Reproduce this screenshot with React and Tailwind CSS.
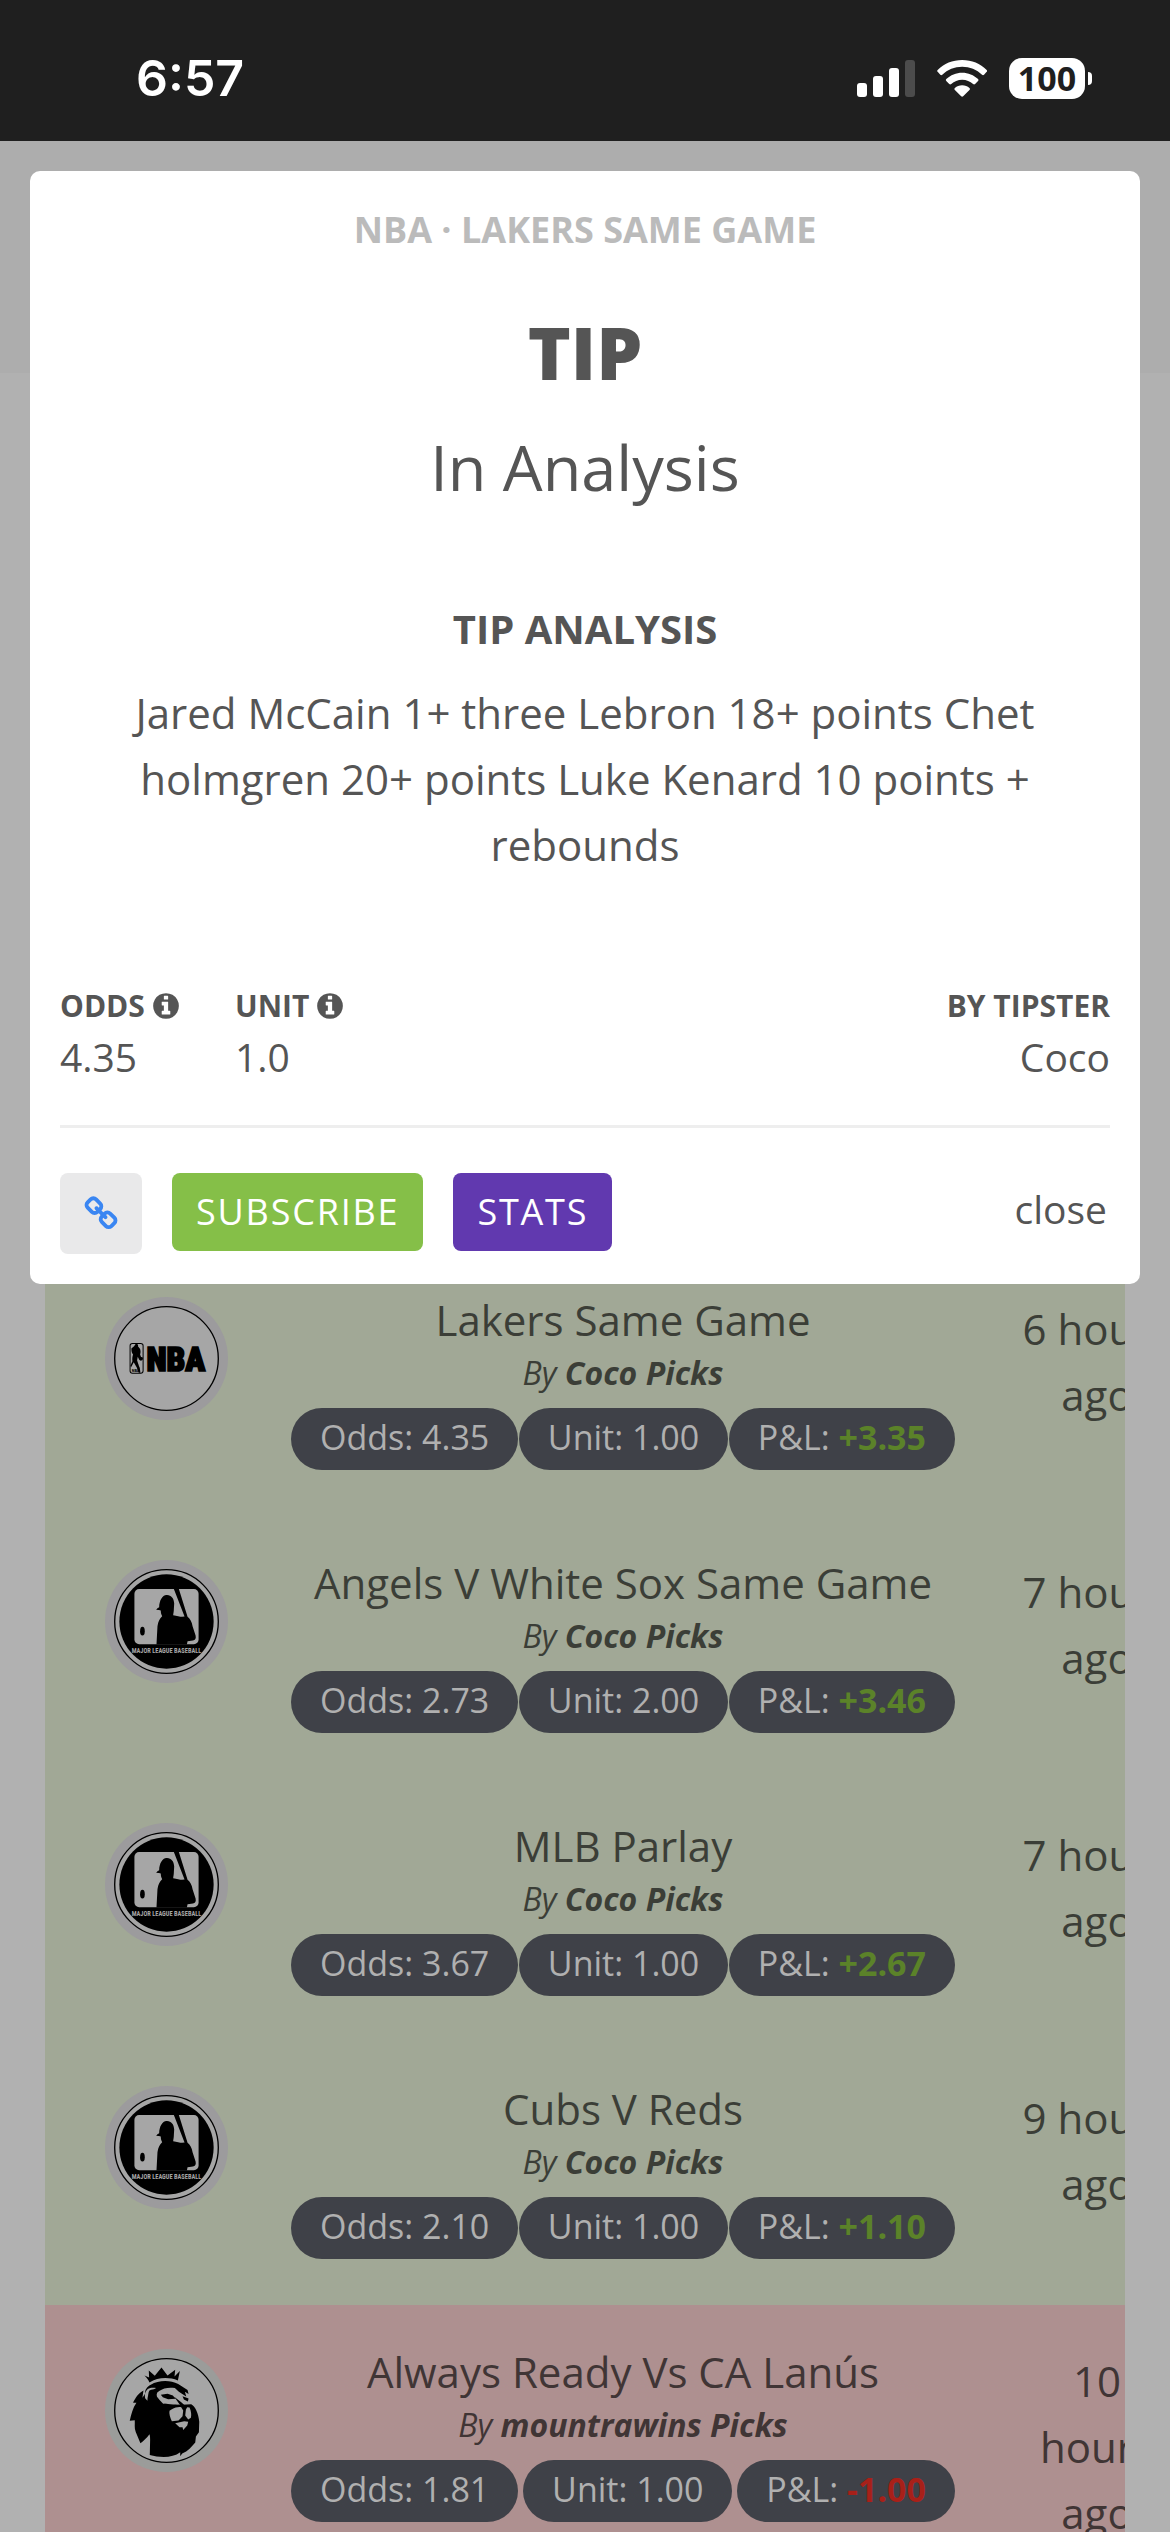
import React, { useState } from "react";

const tips = [
    { title: "Lakers Same Game", tipster: "Coco Picks", odds: "4.35", unit: "1.00", pl: "+3.35", time: "6 hours ago", logo: "nba" },
    { title: "Angels V White Sox Same Game", tipster: "Coco Picks", odds: "2.73", unit: "2.00", pl: "+3.46", time: "7 hours ago", logo: "mlb" },
    { title: "MLB Parlay", tipster: "Coco Picks", odds: "3.67", unit: "1.00", pl: "+2.67", time: "7 hours ago", logo: "mlb" },
    { title: "Cubs V Reds", tipster: "Coco Picks", odds: "2.10", unit: "1.00", pl: "+1.10", time: "9 hours ago", logo: "mlb" },
    { title: "Always Ready Vs CA Lanús", tipster: "mountrawins Picks", odds: "1.81", unit: "1.00", pl: "-1.00", time: "10 hours ago", logo: "lion" },
];

function StatusBar() {
    return (
        <div className="flex h-[141px] items-end justify-between bg-[#1f1f1f] pr-[78px] pb-9 pl-[136px] text-white">
            <span className="font-['Inter'] text-[50px] leading-[54px] font-semibold">6:57</span>
            <div className="flex h-[54px] items-center gap-[22px]">
                <svg className="h-[37px] w-[58px]" viewBox="0 0 58 37" fill="#fff">
                    <rect x="0" y="23" width="10" height="14" rx="3" />
                    <rect x="16" y="16" width="10" height="21" rx="3" />
                    <rect x="32" y="8" width="10" height="29" rx="3" />
                    <rect x="48" y="0" width="10" height="37" rx="3" fill="#4c4c4c" />
                </svg>
                <svg className="h-[37px] w-[50px]" viewBox="348 87 151 111" fill="#fff">
                    <path d="M424 87c29 0 55 11 74 30q3 3 0 5l-8 9q-3 3-6 0c-16-15-37-24-60-24s-44 9-60 24q-3 3-6 0l-8-9q-3-2 0-5c19-19 45-30 74-30z" />
                    <path d="M424 125c18 0 35 7 48 19q3 3 0 6l-9 9q-3 3-6 0c-9-8-20-13-33-13s-24 5-33 13q-3 3-6 0l-9-9q-3-3 0-6c13-12 30-19 48-19z" />
                    <path d="M424 163c9 0 16 3 22 8q3 3 0 6l-19 19q-3 3-6 0l-19-19q-3-3 0-6c6-5 13-8 22-8z" />
                </svg>
                <div className="flex items-center gap-[3px]">
                    <span className="flex h-[41px] w-[76px] items-center justify-center rounded-[13px] bg-white text-[34px] leading-[41px] font-bold text-[#1f1f1f]">
                        100
                    </span>
                    <span className="h-[13px] w-1 rounded-r-full bg-white"></span>
                </div>
            </div>
        </div>
    );
}

function InfoIcon() {
    return (
        <svg className="size-[30px]" viewBox="0 0 1792 1792" fill="currentColor">
            <path d="M1152 1376v-160q0-14-9-23t-23-9h-96v-512q0-14-9-23t-23-9h-320q-14 0-23 9t-9 23v160q0 14 9 23t23 9h96v320h-96q-14 0-23 9t-9 23v160q0 14 9 23t23 9h448q14 0 23-9t9-23zm-128-896v-160q0-14-9-23t-23-9h-192q-14 0-23 9t-9 23v160q0 14 9 23t23 9h192q14 0 23-9t9-23zm640 416q0 209-103 385.5t-279.5 279.5-385.5 103-385.5-103-279.5-279.5-103-385.5 103-385.5 279.5-279.5 385.5-103 385.5 103 279.5 279.5 103 385.5z" />
        </svg>
    );
}

function LinkIcon() {
    return (
        <svg className="size-9" viewBox="0 0 1792 1792" fill="#3a86f2">
            <path d="M1520 1216q0-40-28-68l-208-208q-28-28-68-28-42 0-72 32 3 3 19 18.5t21.5 21.5 15 19 13 25.5 3.5 27.5q0 40-28 68t-68 28q-15 0-27.5-3.5t-25.5-13-19-15-21.5-21.5-18.5-19q-33 31-33 73 0 40 28 68l206 207q27 27 68 27 40 0 68-26l147-146q28-28 28-67zm-703-705q0-40-28-68l-206-207q-28-28-68-28-39 0-68 27l-147 146q-28 28-28 67 0 40 28 68l208 208q27 27 68 27 42 0 72-31-3-3-19-18.5t-21.5-21.5-15-19-13-25.5-3.5-27.5q0-40 28-68t68-28q15 0 27.5 3.5t25.5 13 19 15 21.5 21.5 18.5 19q33-31 33-73zm895 705q0 120-85 203l-147 146q-83 83-203 83-121 0-204-85l-206-207q-83-83-83-203 0-123 88-209l-88-88q-86 88-208 88-120 0-204-84l-208-208q-84-84-84-204t85-203l147-146q83-83 203-83 121 0 204 85l206 207q83 83 83 203 0 123-88 209l88 88q86-88 208-88 120 0 204 84l208 208q84 84 84 204z" />
        </svg>
    );
}

function NbaLogo() {
    return (
        <svg className="size-[123px]" viewBox="46 51 368 368">
            <circle cx="230" cy="235" r="184" fill="#9c9b9d" />
            <circle cx="230" cy="235" r="155" fill="#a6a6a6" stroke="#000" strokeWidth="4" />
            <rect x="121" y="190" width="39" height="89" rx="7" fill="#a6a6a6" stroke="#000" strokeWidth="3" />
            <path d="M138 191c5-1 8 3 7 8l5 6c3 5 3 12 1 18l3 8c4-2 7 2 5 7-3 5-9 4-11 0l-4-8-2 10c3 9 5 16 8 23l2 15h-5l-6-16-9-16-8 15-2-4 6-14c-1-8 0-14 2-20-4-5-5-10-5-18l8-7z" />
            <text x="126" y="274" fontSize="13" fontWeight="700" fontFamily="Roboto Condensed, Liberation Sans, sans-serif">NBA</text>
            <text x="170" y="273" fontSize="99" fontWeight="900" stroke="#000" strokeWidth="5" fontFamily="Roboto Condensed, Open Sans Condensed, Liberation Sans Narrow, sans-serif">NBA</text>
        </svg>
    );
}

function MlbLogo() {
    return (
        <svg className="size-[123px]" viewBox="46 60 368 368">
            <circle cx="230" cy="244" r="184" fill="#9c9b9d" />
            <circle cx="230" cy="244" r="155" fill="#a6a6a6" stroke="#000" strokeWidth="4" />
            <circle cx="230" cy="244" r="141" />
            <rect x="134" y="147" width="192" height="165" rx="14" fill="#a6a6a6" />
            <path d="M252 147h15l26 83c8 6 13 16 15 28l9 28c2 9-1 14-8 15l-16 2-2 10h-91l3-55c2-14 6-23 14-30-2-5-4-9-4-15l-1-3-13-1 4-5 5-3c1-20 9-35 22-36 14-1 22 10 23 25l-1 17c0 8-2 13-2 18 11 2 20 5 27 5l7-1z" />
            <ellipse cx="158" cy="273" rx="7" ry="13" />
            <text x="230" y="338" textAnchor="middle" fontSize="19" fontWeight="700" fill="#a6a6a6" fontFamily="Roboto Condensed, Open Sans Condensed, Liberation Sans Narrow, sans-serif">
                MAJOR LEAGUE BASEBALL
            </text>
        </svg>
    );
}

function LionLogo() {
    return (
        <svg className="size-[123px]" viewBox="46 60 368 368">
            <circle cx="230" cy="244" r="184" fill="#9b9c9a" />
            <circle cx="230" cy="244" r="155" fill="#a6a6a6" stroke="#000" strokeWidth="4" />
            <path d="M164 139l14 6-1-21 18 16 20-25 18 24 23-17-2 20 16-16-6 28c-28-11-61-9-85 6-3-9-9-15-15-21z" />
            <path d="M183 167c23-14 58-15 82-2l28 18 3 12-11-7 4 14-22-14-12-11c-17-3-35 0-47 9-14 10-6 21 7 27l12 9c10 3 20 4 31 4l19 1 27-2c11 6 22 26 24 53l-1 31-9 13-2 18c-10 12-22 26-39 33l-6 8v-12c-23 18-62 16-91 8l1-45c0-5 0-12-2-17-8 11-18 20-27 27l-14-34c-5-12-2-24-3-35l-15 2c5-21 9-38 20-54l-10 0c6-14 15-28 31-37l-3 22 8-12c-1-11 5-21 17-27z" />
            <path d="M174 180c-8 7-10 16-8 27l7 8c0-11 2-21 10-29l16-9c-10-2-18-1-25 3z" fill="#a6a6a6" />
            <path d="M179 184c9-6 20-3 23 5-6 6-8 15-4 22l-12 1c-10-7-13-19-7-28z" />
            <path d="M203 190c15-7 28-12 45-8l18 10 18 9 12 15 4 8-22-4-15 5-25-3-18 2-10-11-9-12z" fill="#a6a6a6" />
            <path d="M213 197l20-3 16 5 8 10-22 1-16-6zM253 203l22 17 9 8h-13zM278 201l18 7-2 9-12-6z" />
            <path d="M246 240c10-5 20-8 28-6l6 10-2 17-12 13-20 2c-5-10-9-23-7-31zM292 234l7 1c5 11 6 22 4 31l-8 5-9-12 2-18zM256 282l27-6 12 2-3 11-12 13-2-8-9 0z" fill="#a6a6a6" />
        </svg>
    );
}

function Logo({ name }) {
    if (name === "nba") return <NbaLogo />;
    if (name === "mlb") return <MlbLogo />;
    return <LionLogo />;
}

function Pill({ label, children }) {
    return (
        <span className="h-[62px] rounded-full bg-[#3f4148] px-[29px] text-[34px] leading-[58px] whitespace-nowrap text-[#b0b0b0]">
            {label}: {children}
        </span>
    );
}

function TipRow({ tip }) {
    const won = !tip.pl.startsWith("-");

    return (
        <tr className={`h-[263px] align-top ${won ? "bg-[#a1a896] text-[#3b3e37]" : "bg-[#ae9090] text-[#403535]"}`}>
            <td className="w-[222px] pt-11 pl-15">
                <Logo name={tip.logo} />
            </td>
            <td className="px-6 pt-[34px] text-center">
                <p className="text-[42px] leading-[66px]">{tip.title}</p>
                <p className="text-[32px] leading-[40px] italic">
                    By <b className="font-bold">{tip.tipster}</b>
                </p>
                <div className="mt-[15px] flex justify-between">
                    <Pill label="Odds">{tip.odds}</Pill>
                    <Pill label="Unit">{tip.unit}</Pill>
                    <Pill label="P&L">
                        <b className={`font-bold ${won ? "text-[#5b8229]" : "text-[#a82019]"}`}>{tip.pl}</b>
                    </Pill>
                </div>
            </td>
            <td className="w-[236px] px-9 pt-[43px] text-center text-[42px] leading-[66px]">{tip.time}</td>
        </tr>
    );
}

function TipDialog({ onClose }) {
    return (
        <div role="dialog" className="absolute inset-x-[30px] top-[171px] rounded-[10px] bg-white px-[30px] pt-8 pb-[30px] text-[#555]">
            <div className="text-center">
                <p className="text-[36px] leading-[54px] font-bold text-[#bbb]">NBA · LAKERS SAME GAME</p>
                <h1 className="mt-11 text-[73px] leading-[102px] font-extrabold">TIP</h1>
                <p className="mt-[22px] text-[63px] leading-[84px]">In Analysis</p>
                <h2 className="mt-[87px] text-[40px] leading-[66px] font-bold">TIP ANALYSIS</h2>
                <p className="mt-[18px] px-[60px] text-[42px] leading-[66px]">
                    Jared McCain 1+ three Lebron 18+ points Chet holmgren 20+ points Luke Kenard 10 points + rebounds
                </p>
            </div>

            <div className="mt-[107px] flex">
                <div className="w-[175px]">
                    <p className="flex items-center gap-1.5 text-[30px] leading-[42px] font-bold">ODDS <InfoIcon /></p>
                    <p className="text-[39px] leading-[60px]">4.35</p>
                </div>
                <div>
                    <p className="flex items-center gap-1.5 text-[30px] leading-[42px] font-bold">UNIT <InfoIcon /></p>
                    <p className="text-[39px] leading-[60px]">1.0</p>
                </div>
                <div className="ml-auto text-right">
                    <p className="text-[30px] leading-[42px] font-bold">BY TIPSTER</p>
                    <p className="text-[39px] leading-[60px]">Coco</p>
                </div>
            </div>

            <hr className="mt-[38px] border-t-3 border-[#eee]" />

            <div className="mt-[45px] flex items-start gap-[30px]">
                <button aria-label="Copy link" className="flex h-[81px] w-[82px] items-center justify-center rounded-lg bg-[#e9e9ea]">
                    <LinkIcon />
                </button>
                <button className="h-[78px] rounded-lg bg-[#85bf48] px-6 text-[36px] font-medium tracking-wider text-white">SUBSCRIBE</button>
                <button className="h-[78px] rounded-lg bg-[#6139af] px-6 text-[36px] font-medium tracking-wider text-white">STATS</button>
                <button className="ml-auto h-[72px] pr-[3px] text-[39px]" onClick={onClose}>close</button>
            </div>
        </div>
    );
}

export default function App() {
    const [open, setOpen] = useState(true);

    return (
        <div className="relative h-screen overflow-hidden bg-[#b1b1b1] font-['Open_Sans',sans-serif]">
            <StatusBar />
            <div className="h-[232px] bg-[#adadad]"></div>
            <main className="mx-[45px] overflow-hidden pt-[880px]">
                <table className="w-[calc(100%+90px)] table-fixed border-collapse">
                    <tbody>
                        {tips.map((tip) => (
                            <TipRow key={tip.title} tip={tip} />
                        ))}
                    </tbody>
                </table>
            </main>
            {open && <TipDialog onClose={() => setOpen(false)} />}
        </div>
    );
}
